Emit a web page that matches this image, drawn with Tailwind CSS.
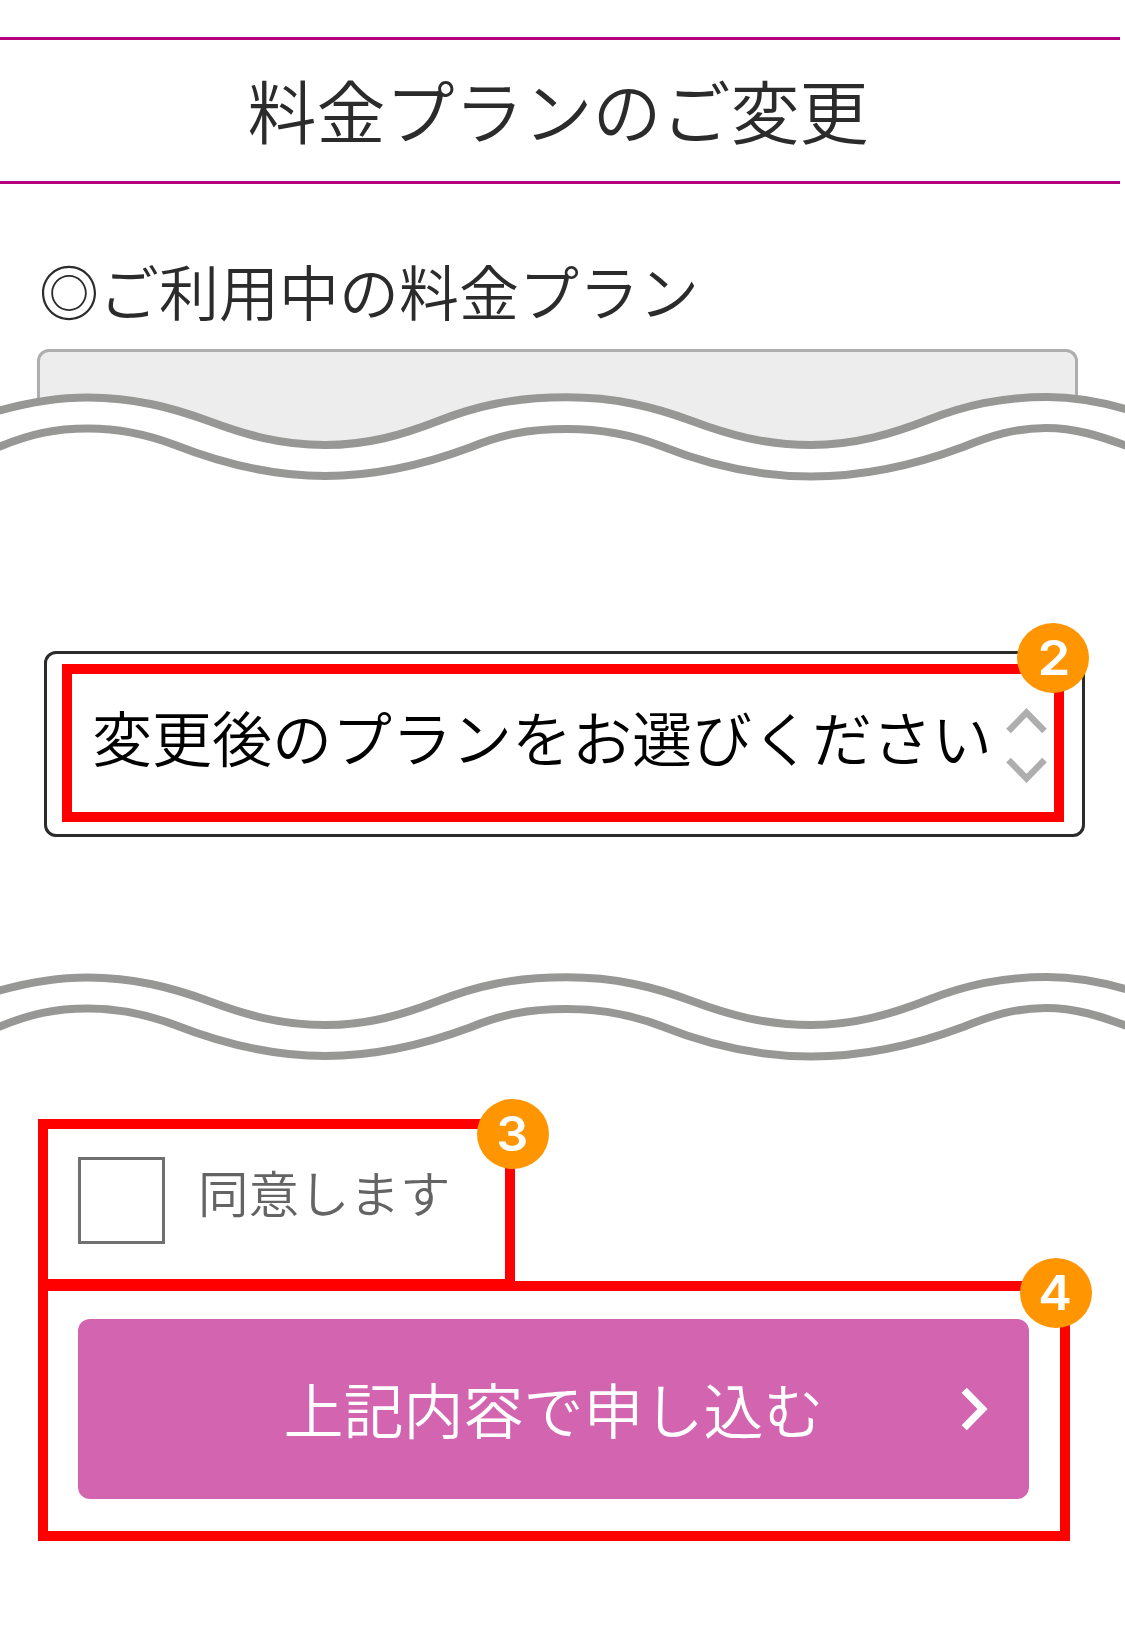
<!DOCTYPE html>
<html lang="ja">
<head>
<meta charset="utf-8">
<title>料金プランのご変更</title>
<script src="https://cdn.jsdelivr.net/npm/@tailwindcss/browser@4"></script>
</head>
<body class="bg-white">
<main class="flex h-[1638px] w-[1125px] flex-col overflow-hidden bg-white pt-[37px] font-['Noto_Sans_CJK_JP',sans-serif] font-[350] text-[#2b2b2b]">
  <header class="flex h-[147px] w-[1120px] shrink-0 items-center justify-center border-y-3 border-[#b4007f] pr-1 pb-[3px]">
    <h1 class="text-[69px] leading-none whitespace-nowrap">料金プランのご変更</h1>
  </header>

  <section class="mt-[73px] flex shrink-0 flex-col">
    <h2 class="ml-[39px] h-[92px] text-[60px] leading-[66px] whitespace-nowrap">◎ご利用中の料金プラン</h2>
    <div class="ml-[37px] h-[100px] w-[1041px] rounded-t-xl border-3 border-b-0 border-[#aeaeae] bg-[#ededed]"></div>
  </section>

  <svg class="-mt-[59px] h-[100px] w-[1125px] shrink-0" viewBox="0 390 1125 100" fill="none" stroke="#979795" stroke-width="8">
    <defs>
      <path id="crest" d="M-2 411C30 402 58 397.5 87.500 397.500C134 397.500 172 407.500 210 421.500C245 434.500 280 445 325 445C368 445 402 435 438 421C475 406.500 512 397.300 567 397.300C615 397.300 653 406.500 692 421C728 434.500 765 445 811 445C855 445 892 434 929 419.500C964 406 1000 397 1047 397C1075 397 1100 401.500 1127 409.500"/>
      <path id="trough" d="M-2 447.300C30 434 55 428.500 88 428.500C120 428.500 146 434 175 445C212 459.500 265 476 325 476C380 476 427 463.500 470 447.500C500 435 527 429 567 429C600 429 630 434 661 446C702 462.500 753 476.500 811 476.500C865 476.500 915 465 963 447C990 436 1015 428 1046 428C1075 428 1100 436 1127 446"/>
    </defs>
    <path stroke="none" fill="#fff" d="M-2 411C30 402 58 397.500 87.500 397.500C134 397.500 172 407.500 210 421.500C245 434.500 280 445 325 445C368 445 402 435 438 421C475 406.500 512 397.300 567 397.300C615 397.300 653 406.500 692 421C728 434.500 765 445 811 445C855 445 892 434 929 419.500C964 406 1000 397 1047 397C1075 397 1100 401.500 1127 409.500V490H-2Z"/>
    <use href="#crest"/>
    <use href="#trough"/>
  </svg>

  <div class="mt-[161px] ml-[44px] h-[186px] w-[1041px] shrink-0 rounded-xl border-3 border-[#2b2b2b] pt-[10px] pl-[15px]">
    <div class="relative flex h-[158px] w-[1002px] items-center border-10 border-[#f00] pl-[20px] text-black">
      <span class="-mt-[14px] w-[901px] text-[60px] leading-none whitespace-nowrap">変更後のプランをお選びください</span>
      <svg class="ml-[12px] h-[80px] w-[44px] shrink-0" viewBox="1005.500 703 44 80" fill="none" stroke="#aeaeae" stroke-width="6.500">
        <path d="M1009 731L1027 712.600L1045 731M1009 760L1027 778.400L1045 760"/>
      </svg>
      <span class="absolute -top-[51px] -right-[35px] flex h-[70px] w-[72px] items-center justify-center rounded-[50%] bg-[#ff9500] pl-[2px] font-['Inter',sans-serif] text-[48px] leading-none font-semibold text-white"><span class="scale-x-110">2</span></span>
    </div>
  </div>

  <svg class="mt-[133px] h-[100px] w-[1125px] shrink-0" viewBox="0 390 1125 100" fill="none" stroke="#979795" stroke-width="8">
    <use href="#crest"/>
    <use href="#trough"/>
  </svg>

  <div class="relative mt-[49px] ml-[38px] flex h-[170px] w-[477px] shrink-0 border-10 border-[#f00] pt-[28px] pl-[30px]">
    <div class="size-[87px] shrink-0 border-3 border-[#707070]"></div>
    <span class="mt-[9px] ml-[33px] text-[50.5px] leading-none whitespace-nowrap text-[#646464]">同意します</span>
    <span class="absolute -top-[30px] -right-[44px] flex h-[70px] w-[72px] items-center justify-center rounded-[50%] bg-[#ff9500] pr-[1px] font-['Inter',sans-serif] text-[48px] leading-none font-semibold text-white"><span class="scale-x-105">3</span></span>
  </div>

  <div class="relative -mt-[8px] ml-[38px] h-[260px] w-[1032px] shrink-0 border-10 border-[#f00] pt-[28px] pl-[30px]">
    <button class="relative flex h-[180px] w-[951px] items-center justify-center rounded-xl bg-[#d264b0] pb-[3px] text-[60px] leading-none text-white">
      <span class="whitespace-nowrap">上記内容で申し込む</span>
      <svg class="absolute top-[64px] right-[36px] h-[52px] w-[36px]" viewBox="957 1383 36 52" fill="none" stroke="#fff" stroke-width="7.300">
        <path d="M964.200 1390.300L982.500 1409L964.200 1427.700"/>
      </svg>
    </button>
    <span class="absolute -top-[33px] -right-[32px] flex h-[70px] w-[72px] items-center justify-center rounded-[50%] bg-[#ff9500] pr-[3px] font-['Inter',sans-serif] text-[48px] leading-none font-semibold text-white"><span class="scale-x-105">4</span></span>
  </div>
</main>
</body>
</html>
